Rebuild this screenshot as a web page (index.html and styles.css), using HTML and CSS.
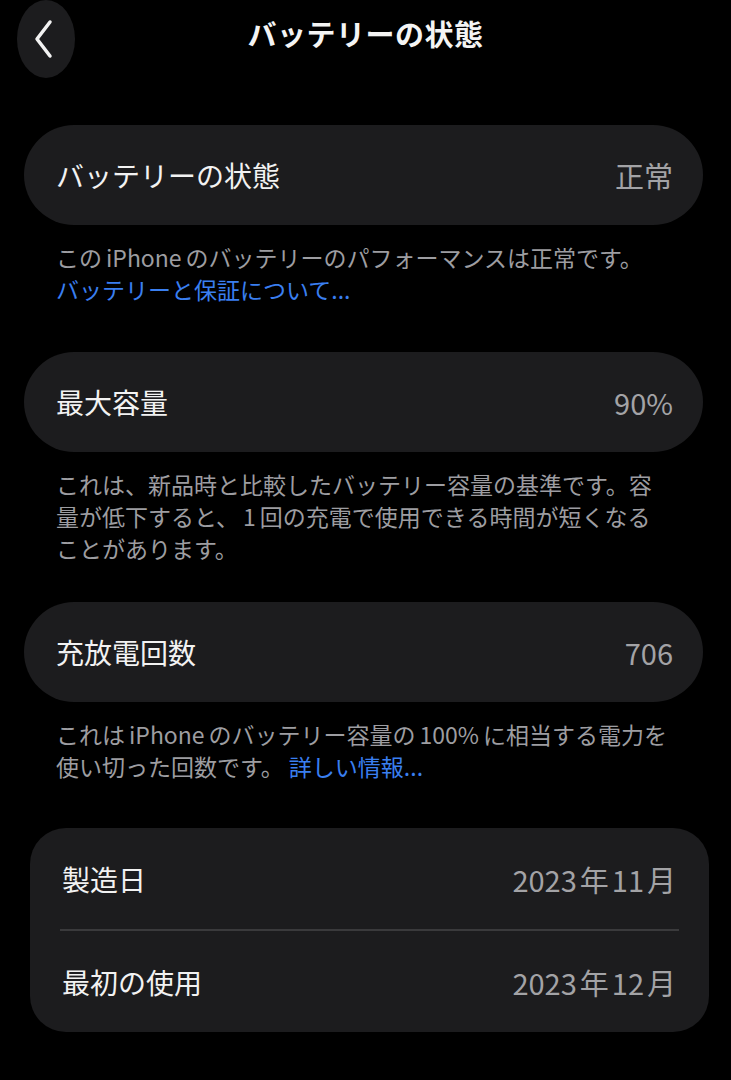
FILE: index.html
```html
<!DOCTYPE html>
<html lang="ja">
<head>
<meta charset="utf-8">
<title>バッテリーの状態</title>
<link rel="stylesheet" href="styles.css">
</head>
<body>
<div class="screen">
  <header class="nav">
    <button class="back" aria-label="戻る">
      <svg width="20" height="40" viewBox="0 0 20 40" aria-hidden="true">
        <polyline points="16,3 3,20 16,37" fill="none" stroke="#f2f2f2" stroke-width="3.5" stroke-linecap="round" stroke-linejoin="round"/>
      </svg>
    </button>
    <h1 class="nav-title">バッテリーの状態</h1>
    <span class="nav-spacer"></span>
  </header>

  <main class="content">
    <section class="group group-first">
      <div class="card pill">
        <div class="row">
          <span class="label">バッテリーの状態</span>
          <span class="value">正常</span>
        </div>
      </div>
      <p class="note">この<span class="en">iPhone</span>のバッテリーのパフォーマンスは正常です。<br><a class="link" href="#">バッテリーと保証について...</a></p>
    </section>

    <section class="group group-capacity">
      <div class="card pill">
        <div class="row">
          <span class="label">最大容量</span>
          <span class="value">90%</span>
        </div>
      </div>
      <p class="note">これは、新品時と比較したバッテリー容量の基準です。容量が低下すると、<span class="en">1</span>回の充電で使用できる時間が短くなることがあります。</p>
    </section>

    <section class="group group-cycles">
      <div class="card pill">
        <div class="row">
          <span class="label">充放電回数</span>
          <span class="value">706</span>
        </div>
      </div>
      <p class="note">これは<span class="en">iPhone</span>のバッテリー容量の<span class="en">100%</span>に相当する電力を使い切った回数です。 <a class="link" href="#">詳しい情報...</a></p>
    </section>

    <section class="group group-dates">
      <div class="card list">
        <div class="row">
          <span class="label">製造日</span>
          <span class="value">2023<span class="unit">年</span>11<span class="unit">月</span></span>
        </div>
        <div class="divider"></div>
        <div class="row">
          <span class="label">最初の使用</span>
          <span class="value">2023<span class="unit">年</span>12<span class="unit">月</span></span>
        </div>
      </div>
    </section>
  </main>
</div>
</body>
</html>
```

FILE: styles.css
```css
html, body {
  margin: 0;
  padding: 0;
  background: #000;
}

body {
  font-family: "Noto Sans CJK JP", "Noto Sans", sans-serif;
  color: #f2f2f2;
}

.screen {
  width: 731px;
  height: 1080px;
  overflow: hidden;
  background: #000;
}

/* navigation bar */
.nav {
  display: grid;
  grid-template-columns: 1fr auto 1fr;
  align-items: start;
  height: 80px;
}

.back {
  justify-self: start;
  width: 58px;
  height: 78px;
  margin-left: 17px;
  border: 0;
  padding: 0 4px 0 0;
  border-radius: 29px / 39px;
  background: #1c1c1e;
  display: flex;
  align-items: center;
  justify-content: center;
}

.nav-title {
  margin: 12px 0 0;
  font-size: 29px;
  line-height: 42px;
  font-weight: 700;
  color: #f4f4f4;
  letter-spacing: 0.5px;
}

/* content groups */
.content {
  display: flex;
  flex-direction: column;
  padding: 0 28px 0 24px;
}

.group {
  display: flex;
  flex-direction: column;
}

.group-first {
  margin-top: 45px;
}

.group-capacity {
  margin-top: 47px;
}

.group-cycles {
  margin-top: 38px;
}

.group-dates {
  margin-top: 46px;
}

.card {
  background: #1c1c1e;
}

.card.pill {
  border-radius: 50px;
}

.card.list {
  border-radius: 36px;
  margin-left: 6px;
  margin-right: -6px;
}

.row {
  display: flex;
  justify-content: space-between;
  align-items: center;
  height: 100px;
  padding: 0 30px 0 32px;
}

.list .row {
  height: 101px;
}

.label {
  font-size: 28px;
  font-weight: 400;
  color: #f2f2f2;
}

.value {
  font-size: 29px;
  font-weight: 400;
  color: #a3a3a6;
}

.unit {
  padding: 0 3px;
}

.divider {
  height: 2px;
  margin: 0 30px;
  background: #3a3a3c;
}

.note {
  margin: 16px 0 0;
  padding: 0 34px 0 32px;
  font-size: 23px;
  line-height: 32px;
  color: #9d9da1;
}

/* latin runs inside japanese text get a little breathing room */
.en {
  padding: 0 4px;
}

.link {
  color: #3a7ff0;
  text-decoration: none;
}
```
